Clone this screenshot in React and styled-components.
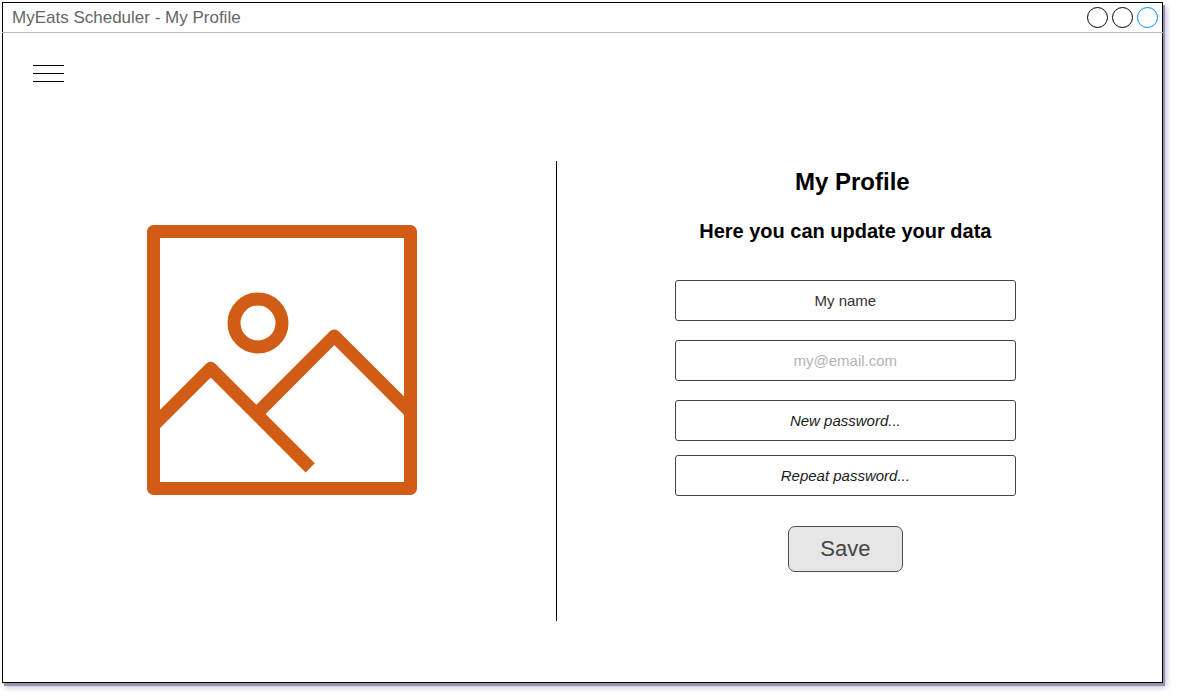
import React from "react";
import styled, { createGlobalStyle } from "styled-components";

const GlobalStyle = createGlobalStyle`
  *, *::before, *::after { box-sizing: border-box; }
  body {
    margin: 0;
    background: #fff;
    color: #000;
    font-family: "Liberation Sans", Arial, sans-serif;
  }
`;

const Page = styled.div`
  display: flex;
  min-height: 100vh;
  padding: 2px 15px 17px 2px;
`;

const AppWindow = styled.div`
  flex: 1;
  min-width: 0;
  border: 1px solid #000;
  background: #fff;
  box-shadow: 2px 3px 0 #9692a6, 3px 4px 6px rgba(80, 80, 160, 0.4);
`;

const TitleBar = styled.header`
  display: flex;
  align-items: center;
  justify-content: space-between;
  height: 30px;
  margin: 0 -1px;
  padding: 0 5px 0 10px;
  border-bottom: 1px solid #b8b8b8;
`;

const WindowTitle = styled.span`
  font-size: 17px;
  line-height: 20px;
  color: #666;
`;

const WindowControls = styled.div`
  display: flex;
  gap: 4px;
`;

const ControlButton = styled.button`
  width: 21px;
  height: 21px;
  padding: 0;
  border: 1px solid ${({ $color }) => $color};
  border-radius: 50%;
  background: transparent;
`;

const Nav = styled.nav`
  display: flex;
  padding: 32px 30px 79px;
`;

const MenuButton = styled.button`
  display: flex;
  flex-direction: column;
  gap: 7px;
  width: 31px;
  padding: 0;
  border: 0;
  background: transparent;
`;

const MenuLine = styled.span`
  width: 100%;
  height: 1px;
  background: #000;
`;

const Content = styled.main`
  display: grid;
  grid-template-columns: 21fr 1px 23fr;
  min-height: 460px;
  margin-bottom: 60px;
`;

const PicturePane = styled.section`
  display: flex;
  align-items: flex-start;
  justify-content: center;
  padding: 64px 0 0 6px;
`;

const Picture = styled.svg`
  width: 270px;
  max-width: 100%;
  height: auto;
`;

const Divider = styled.div`
  background: #000;
`;

const ProfilePane = styled.section`
  padding: 7px 14px 0 0;
  text-align: center;
`;

const Title = styled.h1`
  margin: 0;
  font-size: 24px;
  line-height: 28px;
`;

const Details = styled.div`
  padding: 23px 14px 0 0;
`;

const Subtitle = styled.h2`
  margin: 0 0 37px;
  font-size: 20px;
  line-height: 24px;
`;

const Form = styled.form`
  display: flex;
  flex-direction: column;
  align-items: center;
  gap: 30px;
`;

const Fields = styled.div`
  display: flex;
  flex-direction: column;
  gap: 19px;
  width: 341px;
  max-width: 100%;
`;

const PasswordFields = styled.div`
  display: flex;
  flex-direction: column;
  gap: 14px;
`;

const Field = styled.input`
  width: 100%;
  height: 41px;
  padding: 0 10px;
  border: 1px solid #444;
  border-radius: 3px;
  background: #fff;
  color: ${({ readOnly }) => (readOnly ? "#b3b3b3" : "#333")};
  font-family: inherit;
  font-size: 15px;
  text-align: center;

  &::placeholder {
    color: #1a1a1a;
    font-style: italic;
    opacity: 1;
  }
`;

const SaveButton = styled.button`
  width: 115px;
  height: 46px;
  padding: 0;
  border: 1px solid #4d4d4d;
  border-radius: 7px;
  background: #e6e6e6;
  color: #444;
  font-family: inherit;
  font-size: 22px;
`;

const ProfilePicture = () => (
  <Picture viewBox="0 0 270 270" role="img" aria-label="Profile picture">
    <g fill="none" stroke="#d05c15" strokeWidth="13" strokeLinejoin="round">
      <rect x="6.5" y="6.5" width="257" height="257" />
      <circle cx="111" cy="98" r="24" />
      <path d="M6.5 200.5 63.7 143.3 163.2 242.8" />
      <path d="M109.5 188.8 187.3 111 263.5 187.2" />
    </g>
  </Picture>
);

export default function App() {
  return (
    <>
      <GlobalStyle />
      <Page>
        <AppWindow>
          <TitleBar>
            <WindowTitle>MyEats Scheduler - My Profile</WindowTitle>
            <WindowControls>
              <ControlButton $color="#000" aria-label="Minimize" />
              <ControlButton $color="#000" aria-label="Maximize" />
              <ControlButton $color="#008cff" aria-label="Close" />
            </WindowControls>
          </TitleBar>
          <Nav>
            <MenuButton aria-label="Menu">
              <MenuLine />
              <MenuLine />
              <MenuLine />
            </MenuButton>
          </Nav>
          <Content>
            <PicturePane>
              <ProfilePicture />
            </PicturePane>
            <Divider />
            <ProfilePane>
              <Title>My Profile</Title>
              <Details>
                <Subtitle>Here you can update your data</Subtitle>
                <Form onSubmit={(event) => event.preventDefault()}>
                  <Fields>
                    <Field type="text" aria-label="Name" defaultValue="My name" />
                    <Field type="email" aria-label="Email" value="my@email.com" readOnly />
                    <PasswordFields>
                      <Field type="password" aria-label="New password" placeholder="New password..." />
                      <Field type="password" aria-label="Repeat password" placeholder="Repeat password..." />
                    </PasswordFields>
                  </Fields>
                  <SaveButton type="submit">Save</SaveButton>
                </Form>
              </Details>
            </ProfilePane>
          </Content>
        </AppWindow>
      </Page>
    </>
  );
}
